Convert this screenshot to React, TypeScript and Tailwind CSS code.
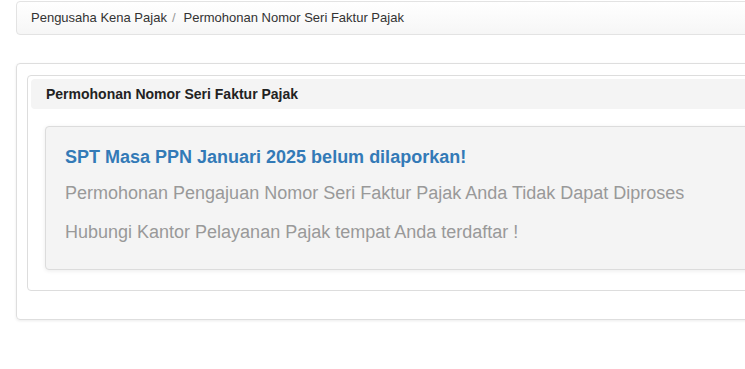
export default function App() {
  return (
    <div className="w-[745px] h-[369px] overflow-hidden bg-white font-['Liberation_Sans',Arial,sans-serif]">
      <div className="w-[800px] pl-4 pt-px">
        {/* breadcrumb */}
        <div className="h-[34px] flex items-center px-[14px] border border-[#e3e3e3] rounded bg-gradient-to-b from-white to-[#f6f6f6] text-[13px] text-[#333]">
          <span>Pengusaha Kena Pajak</span>
          <span className="px-[5px] text-[#999]">/</span>
          <span className="pl-[3px]">Permohonan Nomor Seri Faktur Pajak</span>
        </div>

        {/* outer panel */}
        <div className="mt-[28px] border border-[#dedede] rounded shadow-[0_1px_3px_rgba(0,0,0,0.08)] pt-[11px] pl-[10px] pb-[28px]">
          <div className="border border-[#dddddd] rounded p-[3px] pb-[20px]">
            <div className="h-[30px] flex items-center px-[15px] bg-[#f4f4f4] rounded text-[14px] font-bold text-[#222]">
              Permohonan Nomor Seri Faktur Pajak
            </div>
            <div className="mt-[17px] ml-[14px] border border-[#dcdcdc] rounded-sm bg-[#f4f4f4] shadow-[0_1px_4px_rgba(0,0,0,0.08)] pt-[20px] pl-[19px] pb-[27px]">
              <h3 className="text-[18px] leading-[20px] font-bold text-[#337ab7]">
                SPT Masa PPN Januari 2025 belum dilaporkan!
              </h3>
              <p className="mt-[16px] text-[18px] leading-[20px] text-[#999]">
                Permohonan Pengajuan Nomor Seri Faktur Pajak Anda Tidak Dapat Diproses
              </p>
              <p className="mt-[19px] text-[18px] leading-[20px] text-[#999]">
                Hubungi Kantor Pelayanan Pajak tempat Anda terdaftar !
              </p>
            </div>
          </div>
        </div>
      </div>
    </div>
  );
}
